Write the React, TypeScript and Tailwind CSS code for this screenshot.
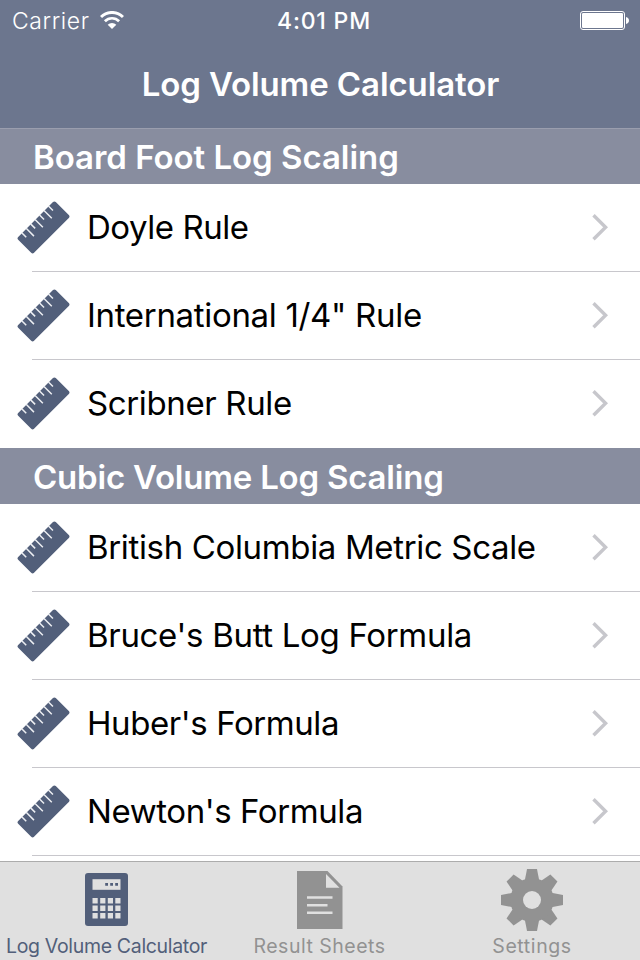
import type { ReactNode } from "react";

interface Rule {
  name: string;
  tracking: string;
}

interface Section {
  title: string;
  tracking: string;
  rules: Rule[];
}

const sections: Section[] = [
  {
    title: "Board Foot Log Scaling",
    tracking: "tracking-[-0.04px]",
    rules: [
      { name: "Doyle Rule", tracking: "tracking-[-0.45px]" },
      { name: 'International 1/4" Rule', tracking: "tracking-[-0.32px]" },
      { name: "Scribner Rule", tracking: "tracking-[-0.37px]" },
    ],
  },
  {
    title: "Cubic Volume Log Scaling",
    tracking: "tracking-[-0.21px]",
    rules: [
      { name: "British Columbia Metric Scale", tracking: "tracking-[-0.35px]" },
      { name: "Bruce's Butt Log Formula", tracking: "tracking-[-0.32px]" },
      { name: "Huber's Formula", tracking: "tracking-[-0.42px]" },
      { name: "Newton's Formula", tracking: "tracking-[-0.42px]" },
    ],
  },
];

function WifiIcon() {
  return (
    <svg width="24" height="18" viewBox="0 0 24 18" fill="none" stroke="white">
      <path d="M1 6a15.6 15.6 0 0 1 22 0" strokeWidth="3" />
      <path d="M4.9 10.2a10 10 0 0 1 14.2 0" strokeWidth="2.7" />
      <path d="M12 18l-4.3-4.3a6 6 0 0 1 8.6 0z" fill="white" stroke="none" />
    </svg>
  );
}

function BatteryIcon() {
  return (
    <svg width="49" height="19" viewBox="0 0 49 19">
      <rect x="0.5" y="0.5" width="44" height="18" rx="2.5" fill="none" stroke="white" />
      <rect x="2" y="2" width="41" height="15" rx="1.2" fill="white" />
      <path d="M46 6c1.8.3 3 1.7 3 3.5s-1.2 3.2-3 3.5z" fill="white" />
    </svg>
  );
}

function RulerIcon() {
  return (
    <svg width="54" height="54" viewBox="0 0 54 54" className="shrink-0">
      <g transform="rotate(-45 27.5 26.4)">
        <rect x="0.9" y="15.2" width="53.2" height="22.4" rx="2" fill="#525f7a" />
        <path
          d="M8.3 14.8v6.4M14.6 14.8v11M20.9 14.8v6.4M27.2 14.8v11M33.5 14.8v6.4M39.8 14.8v11M46.1 14.8v6.4"
          stroke="#eceef2"
          strokeWidth="1.5"
        />
      </g>
    </svg>
  );
}

function Chevron() {
  return (
    <svg width="18" height="27" viewBox="0 0 18 27" fill="none" stroke="#c7c7cc" strokeWidth="3.4">
      <path d="M1.5 1.2L13.6 13.2L1.5 25.2" />
    </svg>
  );
}

function CalculatorIcon() {
  return (
    <svg width="43" height="53" viewBox="0 0 43 53">
      <rect width="43" height="53" rx="3" fill="#525f7a" />
      <rect x="7.5" y="6.2" width="28" height="10.6" fill="#e0e0e0" />
      <path d="M20.2 10h2.8v2.8h-2.8zM25.2 10h2.8v2.8h-2.8zM30.2 10h2.8v2.8h-2.8z" fill="#525f7a" />
      {[25, 32.5, 40].map((y) => (
        <g key={y} fill="#e0e0e0">
          <rect x="7.5" y={y} width="5.2" height="5.5" />
          <rect x="15.2" y={y} width="5.2" height="5.5" />
          <rect x="22.8" y={y} width="5.2" height="5.5" />
          <rect x="30.3" y={y} width="5.2" height="5.5" />
        </g>
      ))}
    </svg>
  );
}

function SheetIcon() {
  return (
    <svg width="46" height="58" viewBox="0 0 46 58">
      <path d="M0 0h30.5L45.5 15.5V58H0z" fill="#929292" />
      <path d="M29 3L42.5 16.7H29z" fill="#e0e0e0" />
      <path d="M10 26.5h25.5M10 34.2h20.5M10 41.7h25.5" stroke="#e0e0e0" strokeWidth="2.6" />
    </svg>
  );
}

function GearIcon() {
  return (
    <svg width="62" height="62" viewBox="-31 -31 62 62">
      <g fill="#929292">
        {[0, 45, 90, 135, 180, 225, 270, 315].map((angle) => (
          <path key={angle} d="M-7.5-18L-5-31H5L7.5-18z" transform={`rotate(${angle})`} />
        ))}
        <circle r="21.8" />
      </g>
      <circle r="9" fill="#e0e0e0" />
    </svg>
  );
}

function RuleRow({ name, tracking, divider }: Rule & { divider: boolean }) {
  return (
    <li className="flex h-[88px] items-stretch">
      <div className="flex w-8 shrink-0 items-center pl-4">
        <RulerIcon />
      </div>
      <div
        className={`flex flex-1 items-center justify-between border-b pr-[30px] pl-[55px] ${
          divider ? "border-[#c8c7cc]" : "border-transparent"
        }`}
      >
        <span className={`whitespace-nowrap text-[33px] text-black ${tracking}`}>{name}</span>
        <Chevron />
      </div>
    </li>
  );
}

interface TabProps {
  label: string;
  className: string;
  children: ReactNode;
}

function Tab({ label, className, children }: TabProps) {
  return (
    <button className={`flex flex-col items-center ${className}`}>
      <span className="flex h-[70px] items-center pt-1.5">{children}</span>
      <span className="whitespace-nowrap text-[19.5px] leading-7">{label}</span>
    </button>
  );
}

export default function App() {
  return (
    <div className="flex h-[960px] w-[640px] flex-col overflow-hidden bg-white font-['Inter',sans-serif]">
      <header className="h-32 shrink-0 bg-[#6c768e] text-white">
        <div className="grid h-10 grid-cols-3 items-center pr-[11px] pl-3">
          <div className="flex items-center gap-[10px]">
            <span className="pt-0.5 text-[23px] font-light tracking-[0.6px]">Carrier</span>
            <WifiIcon />
          </div>
          <span className="pt-0.5 pl-[7px] text-center text-[23px] font-medium tracking-[0.8px]">4:01 PM</span>
          <div className="flex justify-end">
            <BatteryIcon />
          </div>
        </div>
        <h1 className="flex h-[88px] items-center justify-center pt-0.5 pl-px text-[33px] font-semibold tracking-[-0.1px]">
          Log Volume Calculator
        </h1>
      </header>

      <main className="min-h-0 flex-1 overflow-hidden">
        {sections.map((section, i) => (
          <section key={section.title}>
            <h2
              className={`flex h-14 items-center border-t bg-[#888d9f] pt-0.5 pl-[33px] text-[33px] font-semibold text-white ${
                i === 0 ? "border-[#9a9eae]" : "border-[#888d9f]"
              } ${section.tracking}`}
            >
              {section.title}
            </h2>
            <ul>
              {section.rules.map((rule, j) => (
                <RuleRow
                  key={rule.name}
                  {...rule}
                  divider={i === sections.length - 1 || j < section.rules.length - 1}
                />
              ))}
            </ul>
          </section>
        ))}
      </main>

      <nav className="flex h-[99px] shrink-0 border-t border-[#acacac] bg-[#e0e0e0]">
        <Tab label="Log Volume Calculator" className="w-[213px] tracking-[-0.33px] text-[#525f7a]">
          <span className="pb-0.5">
            <CalculatorIcon />
          </span>
        </Tab>
        <Tab label="Result Sheets" className="w-[213px] tracking-[0.5px] text-[#929292]">
          <span className="pb-px">
            <SheetIcon />
          </span>
        </Tab>
        <Tab label="Settings" className="w-[212px] tracking-[0.6px] text-[#929292]">
          <GearIcon />
        </Tab>
      </nav>
    </div>
  );
}
